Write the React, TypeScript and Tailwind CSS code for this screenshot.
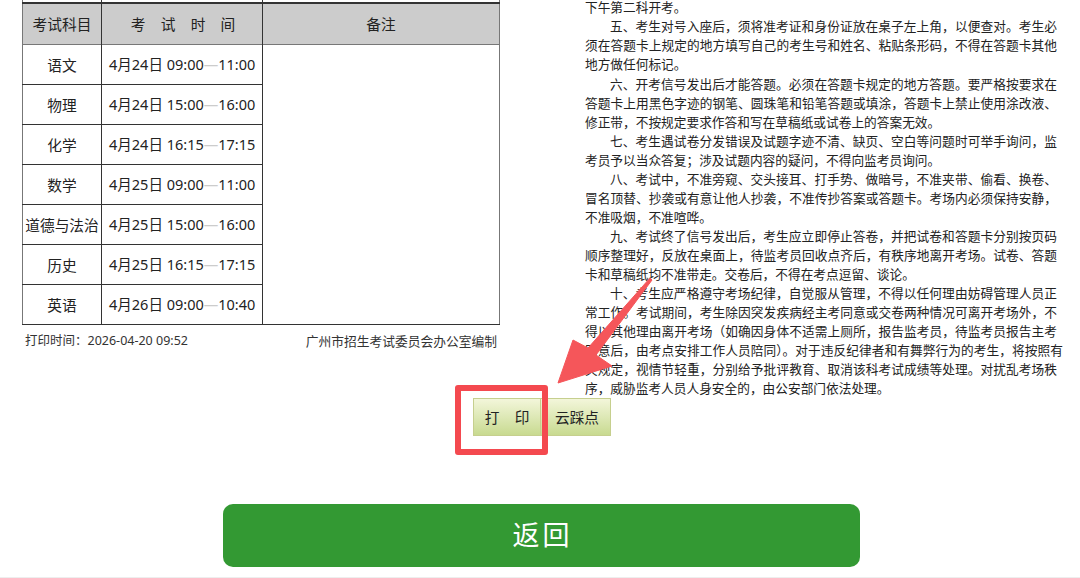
import React from "react";

const rows = [
  ["语文", "4月24日 09:00", "11:00"],
  ["物理", "4月24日 15:00", "16:00"],
  ["化学", "4月24日 16:15", "17:15"],
  ["数学", "4月25日 09:00", "11:00"],
  ["道德与法治", "4月25日 15:00", "16:00"],
  ["历史", "4月25日 16:15", "17:15"],
  ["英语", "4月26日 09:00", "10:40"],
];

const paragraphs: string[][] = [
  ["五、考生对号入座后，须将准考证和身份证放在桌子左上角，以便查对。考生必", "须在答题卡上规定的地方填写自己的考生号和姓名、粘贴条形码，不得在答题卡其他", "地方做任何标记。"],
  ["六、开考信号发出后才能答题。必须在答题卡规定的地方答题。要严格按要求在", "答题卡上用黑色字迹的钢笔、圆珠笔和铅笔答题或填涂，答题卡上禁止使用涂改液、", "修正带，不按规定要求作答和写在草稿纸或试卷上的答案无效。"],
  ["七、考生遇试卷分发错误及试题字迹不清、缺页、空白等问题时可举手询问，监", "考员予以当众答复；涉及试题内容的疑问，不得向监考员询问。"],
  ["八、考试中，不准旁窥、交头接耳、打手势、做暗号，不准夹带、偷看、换卷、", "冒名顶替、抄袭或有意让他人抄袭，不准传抄答案或答题卡。考场内必须保持安静，", "不准吸烟，不准喧哗。"],
  ["九、考试终了信号发出后，考生应立即停止答卷，并把试卷和答题卡分别按页码", "顺序整理好，反放在桌面上，待监考员回收点齐后，有秩序地离开考场。试卷、答题", "卡和草稿纸均不准带走。交卷后，不得在考点逗留、谈论。"],
  ["十、考生应严格遵守考场纪律，自觉服从管理，不得以任何理由妨碍管理人员正", "常工作。考试期间，考生除因突发疾病经主考同意或交卷两种情况可离开考场外，不", "得以其他理由离开考场（如确因身体不适需上厕所，报告监考员，待监考员报告主考", "同意后，由考点安排工作人员陪同）。对于违反纪律者和有舞弊行为的考生，将按照有", "关规定，视情节轻重，分别给予批评教育、取消该科考试成绩等处理。对扰乱考场秩", "序，威胁监考人员人身安全的，由公安部门依法处理。"],
];

export default function App() {
  return (
    <div className="relative w-[1080px] h-[578px] overflow-hidden bg-white text-[#222] font-['Noto_Sans','Noto_Sans_CJK_SC',sans-serif]">
      <div className="flex h-[398px]">
        <div className="ml-[22px] w-[478px] shrink-0">
          <table className="table-fixed border-collapse w-[477px] border-x border-x-[#777] border-b border-b-[#333]">
            <colgroup>
              <col className="w-[79px]" />
              <col className="w-[161px]" />
              <col className="w-[237px]" />
            </colgroup>
            <tbody>
              <tr className="h-[3px]">
                <td className="border-r border-[#333]"></td>
                <td className="border-r border-[#333]"></td>
                <td></td>
              </tr>
              <tr className="h-[41px] bg-[#cccccc] text-[14.7px] border-t-2 border-t-[#333] border-b border-b-[#777]">
                <th className="font-normal pt-[1px] border-r border-[#333] whitespace-nowrap">考试科目</th>
                <th className="font-normal pt-[1px] pl-[2px] border-r border-[#333] whitespace-pre">考    试    时    间</th>
                <th className="font-normal pt-[1px]">备注</th>
              </tr>
              {rows.map((r, i) => (
                <tr key={r[0]} className="h-10 text-[14.7px]">
                  <td className="text-center whitespace-nowrap p-0 pt-[2px] border-b border-r border-[#333]">{r[0]}</td>
                  <td className="whitespace-nowrap p-0 pt-[2px] pl-[7px] text-[14.5px] border-b border-r border-[#333]">
                    {r[1]}
                    <span className="text-[#ccc]">—</span>
                    {r[2]}
                  </td>
                  {i === 0 && <td rowSpan={7}></td>}
                </tr>
              ))}
            </tbody>
          </table>
          <div className="mt-[7px] flex items-center justify-between px-[3px] text-[12.5px] leading-[18px] text-[#333]">
            <span>打印时间：2026-04-20 09:52</span>
            <span className="text-[12.75px]">广州市招生考试委员会办公室编制</span>
          </div>
        </div>
        <div className="ml-[85px] w-[472px] shrink-0 text-[12.7px] leading-[19.05px] text-[#222]">
          <div className="mt-[1px] h-[12px] mb-[4.4px] leading-[12px] whitespace-nowrap">下午第二科开考。</div>
          {paragraphs.map((p, pi) => (
            <div key={pi}>
              {p.map((line, li) => (
                <div
                  key={li}
                  className={
                    "whitespace-nowrap " +
                    (li === 0 ? "pl-[25px] " : "") +
                    (li < p.length - 1 ? "[text-align-last:justify] " : "") +
                    (line.startsWith("同意后") ? "tracking-[0.06px]" : "")
                  }
                >
                  {line}
                </div>
              ))}
            </div>
          ))}
        </div>
      </div>

      <div className="flex justify-center pl-[4px] h-[38px] text-[14.7px] text-[#222]">
        <button className="w-[68px] whitespace-pre border border-[#c6cf8e] bg-gradient-to-b from-[#f3f6da] to-[#c8da90]">打    印</button>
        <button className="w-[70px] pl-[3px] border border-l-0 border-[#c6cf8e] bg-gradient-to-b from-[#f3f6da] to-[#c8da90]">云踩点</button>
      </div>

      <div className="mt-[68px] ml-[223px] flex h-[63px] w-[637px] items-center justify-center rounded-[10px] bg-[#339933] pl-[2px] text-[27px] tracking-[3px] text-white">
        返回
      </div>

      <div className="absolute inset-x-0 bottom-0 h-px bg-[#eeeeee]"></div>
      <div className="absolute left-[455px] top-[385px] h-[70px] w-[93px] rounded-[3px] border-[6px] border-[#f4494f]"></div>
      <svg className="absolute left-0 top-0" width="1080" height="578" viewBox="0 0 1080 578">
        <polygon points="650,278 652,280 596,355 612,366 558,383 573,340 588,348" fill="#f5565a" stroke="#f5565a" strokeWidth="1" strokeLinejoin="round" />
      </svg>
    </div>
  );
}
